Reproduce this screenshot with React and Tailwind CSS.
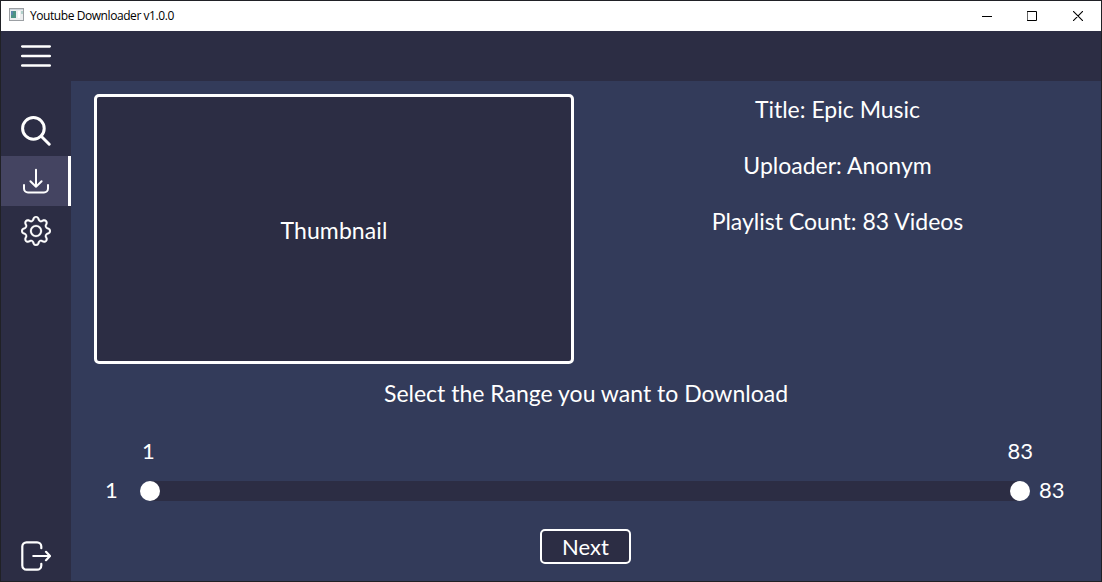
import { BsGear } from "react-icons/bs";

const line = { fill: "none", stroke: "currentColor", strokeLinecap: "round", strokeLinejoin: "round" };

function NavItem({ active, label, children }) {
  return (
    <button
      aria-label={label}
      className={
        active
          ? "flex h-[50px] w-[70px] items-center justify-center border-r-[3px] border-white bg-[#444461] pl-[3px]"
          : "flex h-[50px] w-[70px] items-center justify-center"
      }
    >
      {children}
    </button>
  );
}

function TitleBar() {
  return (
    <header className="flex h-[30px] shrink-0 items-center bg-white text-black">
      <svg className="mb-[2px] ml-2 h-4 w-4" viewBox="0 0 16 16" shapeRendering="crispEdges">
        <path d="M0 1H15V14H0Z" fill="#9b9fa3" />
        <path d="M1 2H14V13H1Z" fill="#eceeef" />
        <path d="M1 2H14V3H1Z" fill="#cdd5dc" />
        <path d="M2 4H7V11H2Z" fill="#4d9384" />
        <path d="M2 4H4V8H2Z" fill="#5b87ac" />
        <path d="M9 4H11V11H9Z" fill="#ffffff" />
        <path d="M12 4H14V7H12Z" fill="#b1d0ca" />
      </svg>
      <h1 className="ml-[5px] font-['Open_Sans',sans-serif] text-[12px] leading-none tracking-[-0.43px]">
        Youtube Downloader v1.0.0
      </h1>
      <div className="ml-auto flex">
        <button aria-label="Minimize" className="flex h-[30px] w-[45px] items-center justify-center">
          <svg className="h-[11px] w-[10px]" viewBox="0 0 10 11" shapeRendering="crispEdges">
            <path d="M0 5H10V6H0Z" fill="black" />
          </svg>
        </button>
        <button aria-label="Maximize" className="flex h-[30px] w-[46px] items-center justify-center">
          <svg className="h-[10px] w-[10px]" viewBox="0 0 10 10">
            <path d="M.5 .5H9.5V9.5H.5Z" {...line} />
          </svg>
        </button>
        <button aria-label="Close" className="flex h-[30px] w-[46px] items-center justify-center">
          <svg className="h-[10px] w-[10px]" viewBox="0 0 10 10">
            <path d="M.2 .2 9.8 9.8M9.8 .2 .2 9.8" {...line} strokeWidth="1.1" />
          </svg>
        </button>
      </div>
    </header>
  );
}

function Sidebar() {
  return (
    <nav className="flex w-[70px] shrink-0 flex-col bg-[#2c2d44] pt-[25px]">
      <NavItem label="Search">
        <svg className="h-[30px] w-[30px]" viewBox="0 0 30 30" {...line} strokeWidth="3">
          <circle cx="12.4" cy="12.4" r="10.8" />
          <path d="M20.2 20.2 28.2 28.2" />
        </svg>
      </NavItem>
      <NavItem label="Download" active>
        <svg className="h-[30px] w-[30px]" viewBox="0 0 30 30" {...line} strokeWidth="2">
          <path d="M15 3.8V20.8M9.4 15.2 15 20.8 20.6 15.2" />
          <path d="M3 19V22.5A4 4 0 0 0 7 26.5H23A4 4 0 0 0 27 22.5V19" />
        </svg>
      </NavItem>
      <NavItem label="Settings">
        <BsGear size={30} strokeWidth={0.12} />
      </NavItem>
      <div className="mt-auto">
        <NavItem label="Exit">
          <svg className="h-[30px] w-[30px]" viewBox="0 0 30 30" {...line} strokeWidth="2.2">
            <path d="M20.3 7.2V5.5A4.2 4.2 0 0 0 16.1 1.3H5.5A4.2 4.2 0 0 0 1.3 5.5V24.5A4.2 4.2 0 0 0 5.5 28.7H16.1A4.2 4.2 0 0 0 20.3 24.5V22.8" />
            <path d="M12.3 15H28.8M25 10.8 29 15 25 19.2" />
          </svg>
        </NavItem>
      </div>
    </nav>
  );
}

export default function App() {
  return (
    <div className="flex h-[582px] w-[1102px] flex-col border border-[#202126] bg-[#333b5a] font-['Lato',sans-serif] text-[23px] leading-7 text-white">
      <TitleBar />
      <div className="flex h-[50px] shrink-0 items-center bg-[#2c2d44] pl-5">
        <svg className="h-[30px] w-[30px]" viewBox="0 0 30 30">
          <path d="M1.2 5.4H28.8M1.2 15H28.8M1.2 24.6H28.8" {...line} strokeWidth="2.5" />
        </svg>
      </div>
      <div className="flex min-h-0 grow">
        <Sidebar />
        <main className="flex grow flex-col">
          <section className="flex pt-[13px] pl-[23px]">
            <div className="flex h-[270px] w-[480px] items-center justify-center rounded-[5px] border-[3px] border-white bg-[#2c2d44] pt-px">
              <span className="tracking-[0.1px]">Thumbnail</span>
            </div>
            <div className="flex grow flex-col items-center gap-7 pt-px">
              <p>Title: Epic Music</p>
              <p>Uploader: Anonym</p>
              <p>Playlist Count: 83 Videos</p>
            </div>
          </section>
          <h2 className="mt-[15px] text-center">Select the Range you want to Download</h2>
          <section className="mt-[30px] px-[33px] text-[22px]">
            <div className="flex justify-between pr-[35px] pl-[38px]">
              <span>1</span>
              <span>83</span>
            </div>
            <div className="mt-[11px] flex items-start">
              <span className="w-[35px] pl-px box-content">1</span>
              <div className="mt-[5px] flex h-5 w-[890px] items-center justify-between bg-[linear-gradient(#2c2d44,#2c2d44)] bg-[length:870px_20px] bg-center bg-no-repeat">
                <span className="h-5 w-5 rounded-full bg-white" />
                <span className="h-5 w-5 rounded-full bg-white" />
              </div>
              <span className="ml-[9px]">83</span>
            </div>
          </section>
          <button className="mt-[25px] ml-[469px] flex h-[35px] w-[91px] items-center justify-center rounded-[5px] border-2 border-white bg-[#2c2d44] text-[22px]">
            Next
          </button>
        </main>
      </div>
    </div>
  );
}
